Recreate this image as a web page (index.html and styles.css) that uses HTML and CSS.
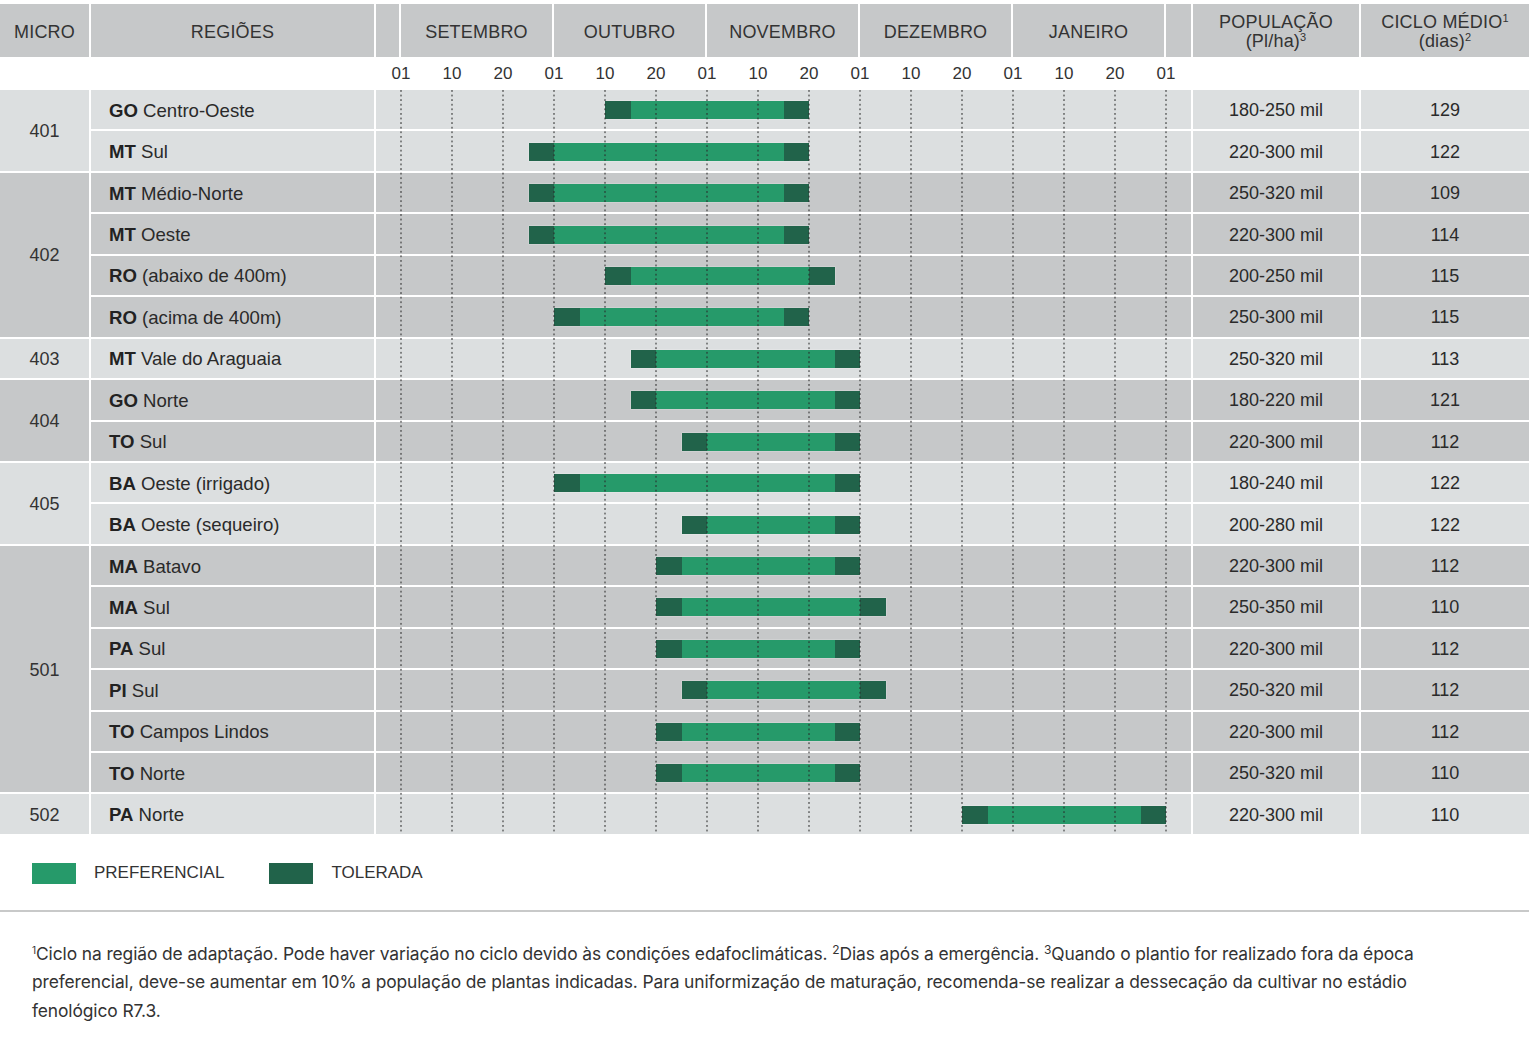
FILE: index.html
```html
<!DOCTYPE html>
<html lang="pt-BR">
<head>
<meta charset="utf-8">
<title>Época de plantio</title>
<link rel="stylesheet" href="styles.css">
</head>
<body>
<div class="sheet">
  <div class="head">
    <div class="hc">MICRO</div>
    <div class="hc">REGIÕES</div>
    <div class="hc"></div>
    <div class="hc">SETEMBRO</div>
    <div class="hc">OUTUBRO</div>
    <div class="hc">NOVEMBRO</div>
    <div class="hc">DEZEMBRO</div>
    <div class="hc">JANEIRO</div>
    <div class="hc"></div>
    <div class="hc two"><span>POPULAÇÃO</span><span>(Pl/ha)<sup>3</sup></span></div>
    <div class="hc two"><span>CICLO MÉDIO<sup>1</sup></span><span>(dias)<sup>2</sup></span></div>
  </div>
  <div class="ticks">
    <span>01</span><span>10</span><span>20</span>
    <span>01</span><span>10</span><span>20</span>
    <span>01</span><span>10</span><span>20</span>
    <span>01</span><span>10</span><span>20</span>
    <span>01</span><span>10</span><span>20</span>
    <span>01</span>
  </div>
  <div class="body">
    <!-- 401 -->
    <div class="micro light" style="grid-row: span 2">401</div>
    <div class="reg light"><b>GO</b>&nbsp;Centro-Oeste</div>
    <div class="chart light"><div class="bar" style="margin-left:229px;width:204px"><i></i><em></em><i></i></div></div>
    <div class="num light">180-250 mil</div>
    <div class="num light">129</div>
    <div class="reg light"><b>MT</b>&nbsp;Sul</div>
    <div class="chart light"><div class="bar" style="margin-left:152.5px;width:280.5px"><i></i><em></em><i></i></div></div>
    <div class="num light">220-300 mil</div>
    <div class="num light">122</div>
    <!-- 402 -->
    <div class="micro dark" style="grid-row: span 4">402</div>
    <div class="reg dark"><b>MT</b>&nbsp;Médio-Norte</div>
    <div class="chart dark"><div class="bar" style="margin-left:152.5px;width:280.5px"><i></i><em></em><i></i></div></div>
    <div class="num dark">250-320 mil</div>
    <div class="num dark">109</div>
    <div class="reg dark"><b>MT</b>&nbsp;Oeste</div>
    <div class="chart dark"><div class="bar" style="margin-left:152.5px;width:280.5px"><i></i><em></em><i></i></div></div>
    <div class="num dark">220-300 mil</div>
    <div class="num dark">114</div>
    <div class="reg dark"><b>RO</b>&nbsp;(abaixo de 400m)</div>
    <div class="chart dark"><div class="bar" style="margin-left:229px;width:229.5px"><i></i><em></em><i></i></div></div>
    <div class="num dark">200-250 mil</div>
    <div class="num dark">115</div>
    <div class="reg dark"><b>RO</b>&nbsp;(acima de 400m)</div>
    <div class="chart dark"><div class="bar" style="margin-left:178px;width:255px"><i></i><em></em><i></i></div></div>
    <div class="num dark">250-300 mil</div>
    <div class="num dark">115</div>
    <!-- 403 -->
    <div class="micro light">403</div>
    <div class="reg light"><b>MT</b>&nbsp;Vale do Araguaia</div>
    <div class="chart light"><div class="bar" style="margin-left:254.5px;width:229.5px"><i></i><em></em><i></i></div></div>
    <div class="num light">250-320 mil</div>
    <div class="num light">113</div>
    <!-- 404 -->
    <div class="micro dark" style="grid-row: span 2">404</div>
    <div class="reg dark"><b>GO</b>&nbsp;Norte</div>
    <div class="chart dark"><div class="bar" style="margin-left:254.5px;width:229.5px"><i></i><em></em><i></i></div></div>
    <div class="num dark">180-220 mil</div>
    <div class="num dark">121</div>
    <div class="reg dark"><b>TO</b>&nbsp;Sul</div>
    <div class="chart dark"><div class="bar" style="margin-left:305.5px;width:178.5px"><i></i><em></em><i></i></div></div>
    <div class="num dark">220-300 mil</div>
    <div class="num dark">112</div>
    <!-- 405 -->
    <div class="micro light" style="grid-row: span 2">405</div>
    <div class="reg light"><b>BA</b>&nbsp;Oeste (irrigado)</div>
    <div class="chart light"><div class="bar" style="margin-left:178px;width:306px"><i></i><em></em><i></i></div></div>
    <div class="num light">180-240 mil</div>
    <div class="num light">122</div>
    <div class="reg light"><b>BA</b>&nbsp;Oeste (sequeiro)</div>
    <div class="chart light"><div class="bar" style="margin-left:305.5px;width:178.5px"><i></i><em></em><i></i></div></div>
    <div class="num light">200-280 mil</div>
    <div class="num light">122</div>
    <!-- 501 -->
    <div class="micro dark" style="grid-row: span 6">501</div>
    <div class="reg dark"><b>MA</b>&nbsp;Batavo</div>
    <div class="chart dark"><div class="bar" style="margin-left:280px;width:204px"><i></i><em></em><i></i></div></div>
    <div class="num dark">220-300 mil</div>
    <div class="num dark">112</div>
    <div class="reg dark"><b>MA</b>&nbsp;Sul</div>
    <div class="chart dark"><div class="bar" style="margin-left:280px;width:229.5px"><i></i><em></em><i></i></div></div>
    <div class="num dark">250-350 mil</div>
    <div class="num dark">110</div>
    <div class="reg dark"><b>PA</b>&nbsp;Sul</div>
    <div class="chart dark"><div class="bar" style="margin-left:280px;width:204px"><i></i><em></em><i></i></div></div>
    <div class="num dark">220-300 mil</div>
    <div class="num dark">112</div>
    <div class="reg dark"><b>PI</b>&nbsp;Sul</div>
    <div class="chart dark"><div class="bar" style="margin-left:305.5px;width:204px"><i></i><em></em><i></i></div></div>
    <div class="num dark">250-320 mil</div>
    <div class="num dark">112</div>
    <div class="reg dark"><b>TO</b>&nbsp;Campos Lindos</div>
    <div class="chart dark"><div class="bar" style="margin-left:280px;width:204px"><i></i><em></em><i></i></div></div>
    <div class="num dark">220-300 mil</div>
    <div class="num dark">112</div>
    <div class="reg dark"><b>TO</b>&nbsp;Norte</div>
    <div class="chart dark"><div class="bar" style="margin-left:280px;width:204px"><i></i><em></em><i></i></div></div>
    <div class="num dark">250-320 mil</div>
    <div class="num dark">110</div>
    <!-- 502 -->
    <div class="micro light">502</div>
    <div class="reg light"><b>PA</b>&nbsp;Norte</div>
    <div class="chart light"><div class="bar" style="margin-left:586px;width:204px"><i></i><em></em><i></i></div></div>
    <div class="num light">220-300 mil</div>
    <div class="num light">110</div>

    <div class="grid-lines">
      <span></span><span></span><span></span><span></span>
      <span></span><span></span><span></span><span></span>
      <span></span><span></span><span></span><span></span>
      <span></span><span></span><span></span><span></span>
    </div>
  </div>

  <div class="legend">
    <div class="item"><span class="sw pref"></span>PREFERENCIAL</div>
    <div class="item"><span class="sw tol"></span>TOLERADA</div>
  </div>
  <div class="rule"></div>
  <p class="notes"><sup class="s1">1</sup>Ciclo na região de adaptação. Pode haver variação no ciclo devido às condições edafoclimáticas. <sup>2</sup>Dias após a emergência. <sup>3</sup>Quando o plantio for realizado fora da época<br>preferencial, deve-se aumentar em 10% a população de plantas indicadas. Para uniformização de maturação, recomenda-se realizar a dessecação da cultivar no estádio<br>fenológico R7.3.</p>
</div>
</body>
</html>
```
FILE: styles.css
```css
* { box-sizing: border-box; }
html, body { margin: 0; padding: 0; background: #ffffff; }
body {
  font-family: "Liberation Sans", Arial, sans-serif;
  color: #2a2a2a;
}
.sheet {
  width: 1529px;
  padding-top: 4px;
}
.head {
  display: grid;
  grid-template-columns: 89px 283px 23px 151px 151px 151px 151px 151px 25px 166px 168px;
  column-gap: 2px;
  height: 52.5px;
}
.hc {
  background: #c6c8c9;
  display: flex;
  align-items: center;
  justify-content: center;
  font-size: 18px;
  color: #333;
  letter-spacing: 0.2px;
  padding-top: 4px;
}
.hc.two {
  flex-direction: column;
  line-height: 18.5px;
  padding-top: 3px;
}
.hc sup {
  font-size: 11px;
  vertical-align: 6px;
  line-height: 0;
}
.ticks {
  height: 33.5px;
  display: flex;
  align-items: center;
  padding-left: 375.5px;
  padding-top: 2px;
  font-size: 17px;
  color: #333;
}
.ticks span {
  width: 51px;
  text-align: center;
  flex: none;
}
.body {
  position: relative;
  display: grid;
  grid-template-columns: 89px 283px 815px 166px 168px;
  grid-auto-rows: 39.45px;
  gap: 2px;
  font-size: 18px;
}
.light { background: #dcdfe0; }
.dark { background: #c6c8c9; }
.micro {
  grid-column: 1;
  display: flex;
  align-items: center;
  justify-content: center;
  padding-top: 2px;
  color: #333;
}
.reg {
  grid-column: 2;
  display: flex;
  align-items: center;
  padding-left: 18px;
  padding-top: 2px;
  font-size: 18.6px;
  color: #2a2a2a;
}
.reg b { font-weight: 700; color: #222; }
.chart {
  grid-column: 3;
  display: flex;
  align-items: center;
  padding-top: 1px;
}
.bar {
  height: 18px;
  display: flex;
  flex: none;
  box-shadow: 0 0 0 0.5px rgba(255,255,255,0.35);
}
.bar i {
  width: 25.5px;
  flex: none;
  background: #21634a;
}
.bar em {
  flex: 1;
  background: #269a6a;
}
.num {
  display: flex;
  align-items: center;
  justify-content: center;
  padding-top: 2px;
  color: #2a2a2a;
}
.grid-lines {
  position: absolute;
  top: 0;
  bottom: 0;
  left: 400px;
  display: flex;
  gap: 49px;
  pointer-events: none;
}
.grid-lines span {
  width: 2px;
  background-image: linear-gradient(to bottom, rgba(40,40,40,0.85) 1.6px, transparent 1.6px);
  background-size: 2px 4.6px;
  background-repeat: repeat-y;
  transform: scaleX(0.6);
}
.legend {
  display: flex;
  align-items: center;
  height: 76px;
  padding-left: 32px;
  padding-top: 3px;
  gap: 45px;
  font-size: 17px;
  color: #333;
}
.item {
  display: flex;
  align-items: center;
  gap: 18px;
}
.sw {
  width: 44px;
  height: 21px;
  display: block;
}
.sw.pref { background: #269a6a; }
.sw.tol { background: #21634a; }
.rule {
  height: 2px;
  background: #c8c9c9;
}
.notes {
  margin: 0;
  padding: 28px 0 0 32px;
  font-family: Inter, "Liberation Sans", sans-serif;
  font-size: 17.4px;
  line-height: 28.5px;
  color: #333;
  letter-spacing: -0.1px;
  white-space: nowrap;
}
.notes sup {
  font-size: 12px;
  vertical-align: 6px;
  line-height: 0;
}
.notes sup.s1 { font-size: 10px; }
```
